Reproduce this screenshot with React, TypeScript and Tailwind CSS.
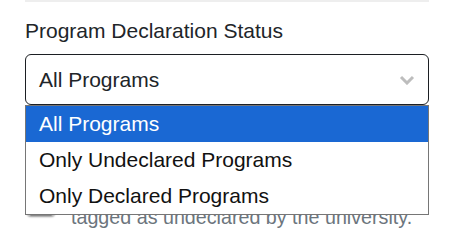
import React from "react";

export default function App() {
  const options = ["All Programs", "Only Undeclared Programs", "Only Declared Programs"];
  return (
    <div className="w-[450px] h-[238px] overflow-hidden bg-white" style={{ fontFamily: '"Liberation Sans", Arial, sans-serif' }}>
      <div className="pl-[25px] pr-[21px] relative">
        <div className="h-[2px] bg-[#eeeeee]" />
        <div className="mt-[16px] text-[21px] leading-[26px] text-[#212529]">Program Declaration Status</div>
        <div className="relative mt-[10px] z-10">
          <div className="h-[51px] rounded-[6px] border border-[#1c1f23] flex items-center justify-between pl-[13px] pr-[12px] text-[21px] text-[#212529]">
            <span>All Programs</span>
            <svg width="16" height="10" viewBox="0 0 16 10" className="mr-[1px]">
              <path d="M2 2 L8 8 L14 2" fill="none" stroke="#bdbdbd" strokeWidth="3" />
            </svg>
          </div>
          <div className="absolute left-0 right-0 top-[51px] border border-[#767676] bg-white">
            {options.map((o, i) => (
              <div
                key={o}
                className={`h-[36px] flex items-center pl-[13px] text-[21px] ${i === 0 ? "bg-[#1a68d3] text-white" : "text-[#111111]"}`}
              >
                {o}
              </div>
            ))}
          </div>
        </div>
        <div className="flex items-start mt-[83px] gap-[16px]">
          <div className="ml-[2px] w-[28px] h-[28px] shrink-0 rounded-[4px] border border-[#8a8a8a] shadow-[0_1px_2px_rgba(0,0,0,0.4)]" />
          <div className="mt-[17px] text-[19.7px] leading-[24px] whitespace-nowrap text-[#6c757d]">
            tagged as undeclared by the university.
          </div>
        </div>
      </div>
    </div>
  );
}
